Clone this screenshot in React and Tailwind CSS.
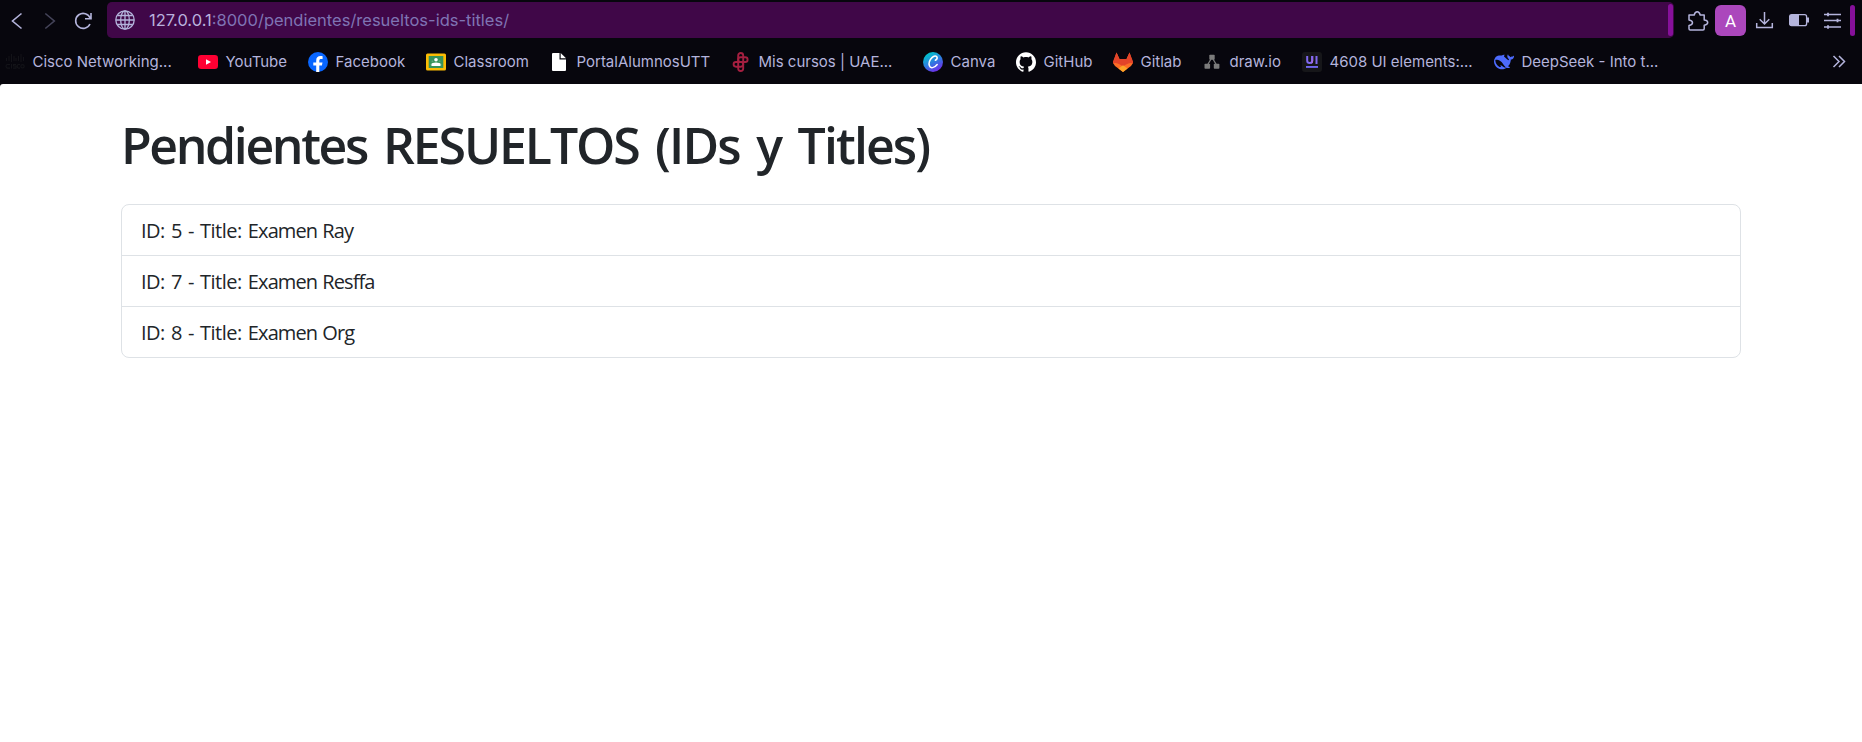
import React from "react";
import { SiGithub } from "react-icons/si";

const items = [
  { id: 5, title: "Examen Ray" },
  { id: 7, title: "Examen Resffa" },
  { id: 8, title: "Examen Org" },
];

function Cisco() {
  return (
    <svg viewBox="0 0 20 20" className="size-5" fill="none" stroke="#131318" strokeWidth="1.1">
      <path d="M1.5 6v3M4 4v5M6.5 2v8M9 4v5M11 6v3M13.5 4v5M16 2v8M18.5 5v4" />
      <path d="M5 12.5H2.5q-1.5 0-1.5 1.8t1.5 1.8H5M6.5 12v4.500M11 12.500H8.500v1.500H11v2.100H8M15 12.500h-1.500q-1.300 0-1.300 1.800t1.300 1.800H15" />
      <circle cx="17.500" cy="14.300" r="1.700" />
    </svg>
  );
}

function YouTube() {
  return (
    <svg viewBox="0 0 20 20" className="size-5">
      <rect y="3" width="20" height="14" rx="3.200" fill="#ff0033" />
      <path d="M8 7.200v5.600l5-2.800z" fill="#fff" />
    </svg>
  );
}

function Facebook() {
  return (
    <svg viewBox="0 0 20 20" className="size-5">
      <circle cx="10" cy="10" r="10" fill="#0866ff" />
      <path d="M8.200 19.900v-6.500H5.300v-3h2.900V8.700c0-3.200 1.500-4.700 4.400-4.700.7 0 1.500.1 2 .3v2.700h-1.300c-1.500 0-2 .6-2 2v1.400h3.200l-.6 3h-2.600v6.500z" fill="#fff" />
    </svg>
  );
}

function Classroom() {
  return (
    <svg viewBox="0 0 20 20" className="size-5">
      <rect y="1.500" width="20" height="17" rx="1.500" fill="#fbbc04" />
      <rect x="2.700" y="4" width="14.600" height="12" fill="#37935a" />
      <circle cx="10" cy="7.800" r="1.800" fill="#fff" />
      <circle cx="6.400" cy="9.200" r="1" fill="#57a576" />
      <circle cx="13.600" cy="9.200" r="1" fill="#57a576" />
      <path d="M4.300 13.500v-1q0-1.500 2.500-1.500h6.400q2.500 0 2.500 1.500v1z" fill="#57a576" />
      <path d="M5.500 14v-1.500q0-1.900 4.500-1.900t4.500 1.900V14z" fill="#fff" />
    </svg>
  );
}

function Page() {
  return (
    <svg viewBox="0 0 20 20" className="size-5">
      <path d="M3 2q0-1 1-1h6.500v6.500H17V18q0 1-1 1H4q-1 0-1-1z" fill="#fff" />
      <path d="M11.700 1 17 6.300h-5.300z" fill="#fff" />
    </svg>
  );
}

function Knot() {
  return (
    <svg viewBox="0 0 20 20" className="size-5" fill="none" stroke="#a51f40" strokeWidth="1.900">
      <rect x="7.200" y="1" width="5" height="18" rx="2.500" />
      <rect x="7.200" y="5.300" width="9.400" height="4.700" rx="2.350" />
      <rect x="2.600" y="10" width="9.600" height="4.700" rx="2.350" />
    </svg>
  );
}

function Canva() {
  return (
    <svg viewBox="0 0 20 20" className="size-5">
      <defs>
        <linearGradient id="canva" x1="0.200" y1="0.100" x2="0.700" y2="1">
          <stop offset="0" stopColor="#00c4cc" />
          <stop offset="0.500" stopColor="#2f7be0" />
          <stop offset="1" stopColor="#7426ec" />
        </linearGradient>
      </defs>
      <circle cx="10" cy="10" r="10" fill="url(#canva)" />
      <path d="M12.300 8.300c1.400-.6 2.100-2 1.700-3.200-.5-1.500-3-1.500-5 .5-2.300 2.300-3.400 5.800-2.600 8.200.9 2.900 4.900 2.400 7.800-1.300" fill="none" stroke="#fff" strokeWidth="1.500" strokeLinecap="round" />
    </svg>
  );
}

function Gitlab() {
  return (
    <svg viewBox="0 0 20 20" className="size-5">
      <path d="M0 11 3.500.5 6.500 7h7l3-6.500L20 11l-2 3-8 6-8-6z" fill="#fc6d26" />
      <path d="M0 9.500 3.500.5l2.900 6.600h7.200L16.500.5 20 9.500q.2 1-.1 1.800-4-1.500-9.900 3.200Q4.100 9.800.1 11.300-.2 10.500 0 9.500z" fill="#e24329" />
      <path d="m5.500 16.600 4.500-3.300 4.500 3.300L10 20z" fill="#fca326" />
    </svg>
  );
}

function Drawio() {
  return (
    <svg viewBox="0 0 20 20" className="size-5" fill="#7b7b7b">
      <path d="M9 7 5.500 13M11 7l3.500 6" stroke="#7b7b7b" strokeWidth="1.300" />
      <rect x="7.300" y="2.800" width="5.400" height="5" rx="0.800" />
      <rect x="2.500" y="11.800" width="5.600" height="5" rx="0.800" />
      <rect x="11.800" y="11.800" width="5.600" height="5" rx="0.800" />
    </svg>
  );
}

function UiElements() {
  return (
    <svg viewBox="0 0 20 20" className="size-5">
      <defs>
        <linearGradient id="ui" x1="0" y1="0" x2="1" y2="1">
          <stop offset="0" stopColor="#6b67ff" />
          <stop offset="0.600" stopColor="#9467e8" />
          <stop offset="1" stopColor="#d67bc5" />
        </linearGradient>
      </defs>
      <rect width="20" height="20" rx="3" fill="#161619" />
      <path d="M5.200 4v4.700q0 2.300 2.500 2.300t2.500-2.300V4M14.500 4v8" fill="none" stroke="#8068f0" strokeWidth="2" />
      <path d="M9.200 4h2v4.700q0 2-1.500 3l-1.300-1.500q.8-.4.800-1.500z" fill="url(#ui)" />
      <path d="M4 14h12v1.900H4z" fill="#7166ee" />
    </svg>
  );
}

function DeepSeek() {
  return (
    <svg viewBox="0 0 24 24" className="size-5">
      <path
        fill="#4d6bfe"
        d="M23.748 4.482c-.254-.124-.364.113-.512.234-.051.039-.094.090-.137.136-.372.397-.806.657-1.373.626-.829-.046-1.537.214-2.163.848-.133-.782-.575-1.248-1.247-1.548-.352-.156-.708-.311-.955-.650-.172-.241-.219-.510-.305-.774-.055-.160-.110-.323-.293-.350-.200-.031-.278.136-.356.276-.313.572-.434 1.202-.422 1.840.027 1.436.633 2.580 1.838 3.393.137.093.172.187.129.323-.082.280-.180.552-.266.833-.055.179-.137.217-.329.140a5.526 5.526 0 0 1-1.736-1.180c-.857-.828-1.631-1.742-2.597-2.458a11.365 11.365 0 0 0-.689-.471c-.985-.957.130-1.743.388-1.836.270-.098.093-.432-.779-.428-.872.004-1.670.295-2.687.684a3.055 3.055 0 0 1-.465.137 9.597 9.597 0 0 0-2.883-.102c-1.885.210-3.390 1.102-4.497 2.623C.082 8.606-.231 10.684.152 12.850c.403 2.284 1.569 4.175 3.360 5.653 1.858 1.533 3.997 2.284 6.438 2.140 1.482-.085 3.133-.284 4.994-1.860.470.234.962.327 1.780.397.630.059 1.236-.030 1.705-.128.735-.156.684-.837.419-.961-2.155-1.004-1.682-.595-2.113-.926 1.096-1.296 2.746-2.642 3.392-7.003.050-.347.007-.565 0-.845-.004-.170.035-.237.230-.256a4.173 4.173 0 0 0 1.545-.475c1.396-.763 1.960-2.015 2.093-3.517.020-.230-.004-.467-.247-.588zM11.581 18c-2.089-1.642-3.102-2.183-3.520-2.160-.392.024-.321.471-.235.763.090.288.207.486.371.739.114.167.192.416-.113.603-.673.416-1.842-.140-1.897-.167-1.361-.802-2.500-1.860-3.301-3.307-.774-1.393-1.224-2.887-1.298-4.482-.020-.386.093-.522.477-.592a4.696 4.696 0 0 1 1.529-.039c2.132.312 3.946 1.265 5.468 2.774.868.860 1.525 1.887 2.202 2.891.720 1.066 1.494 2.082 2.480 2.914.348.292.625.514.891.677-.802.090-2.140.110-3.054-.614z"
      />
    </svg>
  );
}

function GitHub() {
  return <SiGithub className="size-5 text-white" />;
}

const bookmarks = [
  { label: "Cisco Networking...", Icon: Cisco, w: "w-[193px]" },
  { label: "YouTube", Icon: YouTube, w: "w-[110px]" },
  { label: "Facebook", Icon: Facebook, w: "w-[118px]" },
  { label: "Classroom", Icon: Classroom, w: "w-[123px]" },
  { label: "PortalAlumnosUTT", Icon: Page, w: "w-[182px]" },
  { label: "Mis cursos | UAE...", Icon: Knot, w: "w-[192px]" },
  { label: "Canva", Icon: Canva, w: "w-[93px]" },
  { label: "GitHub", Icon: GitHub, w: "w-[97px]" },
  { label: "Gitlab", Icon: Gitlab, w: "w-[89px]" },
  { label: "draw.io", Icon: Drawio, w: "w-[100px]" },
  { label: "4608 UI elements:...", Icon: UiElements, w: "w-[192px]" },
  { label: "DeepSeek - Into t...", Icon: DeepSeek, w: "w-[180px]" },
];

function Toolbar() {
  return (
    <div className="flex h-10 items-center pb-px text-[#b4b4dc]">
      <svg className="ml-[7px] size-5 shrink-0" viewBox="0 0 20 20" fill="none" stroke="currentColor" strokeWidth="1.600">
        <path d="M14.500 3.500 5.500 11l9 7.500" />
      </svg>
      <svg className="ml-[13px] size-5 shrink-0" viewBox="0 0 20 20" fill="none" stroke="#45445a" strokeWidth="1.600">
        <path d="m5.300 3.500 9 7.500-9 7.500" />
      </svg>
      <svg className="ml-[13px] size-5 shrink-0" viewBox="0 0 20 20" fill="none" stroke="currentColor" strokeWidth="1.600">
        <path d="M17 14a7.500 7.500 0 1 1 .2-5.800M18 3v5.700h-6" />
      </svg>
      <div className="ml-[14px] mt-px flex h-9 w-[1567px] shrink-0 items-center rounded-[5px] bg-[#400748] pl-2">
        <svg className="size-5 shrink-0" viewBox="0 0 20 20" fill="none" stroke="currentColor" strokeWidth="1.300">
          <circle cx="10" cy="10" r="9.200" />
          <ellipse cx="10" cy="10" rx="4.300" ry="9.200" />
          <path d="M10 1v18M1 10h18M2.500 5.500h15M2.500 14.500h15" />
        </svg>
        <span className="ml-[14px] whitespace-nowrap text-[16.500px] leading-5 text-[#7f74b4]">
          <span className="text-[#b9b1dd]">127.0.0.1</span>:8000/pendientes/resueltos-ids-titles/
        </span>
        <span className="ml-auto mr-px h-8 w-[5px] rounded-[3px] bg-[#86109a]" />
      </div>
      <svg className="ml-[13px] mt-[2px] size-[22px] shrink-0" viewBox="0 0 22 22" fill="none" stroke="currentColor" strokeWidth="1.500" strokeLinejoin="round">
        <path d="M2 5h5.200q.8-3.200 3-3.200t3 3.200h4v5q3.500.3 3.500 2.600t-3.500 2.600v3.500q0 1.200-1.200 1.200H3.200Q2 19.900 2 18.700v-3.200q3.500-.5 3.500-2.800T2 9.900z" />
      </svg>
      <div className="ml-[6px] mt-[2px] flex h-[31px] w-[31px] shrink-0 items-center justify-center rounded-[6px] bg-[#ab47bc] pt-[2px] font-['Roboto',sans-serif] text-[17px] leading-none text-white">A</div>
      <svg className="ml-[9px] mt-px size-5 shrink-0" viewBox="0 0 20 20" fill="none" stroke="currentColor" strokeWidth="1.500">
        <path d="M9.500 2v12M4.700 9.200l4.800 4.800 4.800-4.800M1.700 13v4.500h15.600V13" />
      </svg>
      <svg className="ml-[14px] size-5 shrink-0" viewBox="0 0 20 20">
        <rect x="0.600" y="4.700" width="17" height="11" rx="2" fill="none" stroke="currentColor" strokeWidth="1.300" />
        <path d="M1 5h9v10.500H1z" fill="currentColor" />
        <path d="M18 7.500h2v5h-2z" fill="currentColor" />
      </svg>
      <svg className="ml-[14px] size-5 shrink-0" viewBox="0 0 20 20" stroke="currentColor" fill="none" strokeWidth="1.500">
        <path d="M1 4.500h17M1 10.500h17M1 17h17" />
        <path d="M5 2.800v3.400M14.500 8.800v3.400M5 15.300v3.400" strokeWidth="1.800" />
      </svg>
      <span className="ml-[7px] mt-[2px] h-[31px] w-[5px] shrink-0 rounded-[3px] bg-[#86109a]" />
    </div>
  );
}

export default function App() {
  return (
    <div className="flex h-[742px] w-full flex-col overflow-hidden bg-[#07060d] font-['Inter',sans-serif]">
      <header className="h-[84px] shrink-0">
        <Toolbar />
        <nav className="flex h-11 items-center pl-[5px] text-[15px] leading-5 text-[#b4b4dc]">
          {bookmarks.map(({ label, Icon, w }) => (
            <a key={label} className={`flex shrink-0 items-center gap-[7.500px] whitespace-nowrap ${w}`}>
              <Icon />
              <span>{label}</span>
            </a>
          ))}
          <svg className="ml-auto mr-[13px] size-5" viewBox="0 0 20 20" fill="none" stroke="currentColor" strokeWidth="1.500">
            <path d="m4.500 4 5.500 5.500L4.500 15M10 4l5.500 5.500L10 15" />
          </svg>
        </nav>
      </header>
      <main className="flex-1 rounded-tl-[3px] bg-white px-[121px] pt-[31px] font-['Open_Sans',sans-serif] text-[#212529]">
        <h1 className="whitespace-nowrap text-[50px] font-semibold leading-[60px] [word-spacing:5.500px]">
          <span className="tracking-[-2.400px]">Pendientes </span>
          <span className="tracking-[-2.100px]">RESUELTOS </span>
          <span className="tracking-[-1.900px]">(IDs y Titles)</span>
        </h1>
        <ul className="mt-[29px] divide-y divide-[#dee2e6] rounded-[8px] border border-[#dee2e6]">
          {items.map(({ id, title }) => (
            <li key={id} className="h-[51px] whitespace-nowrap pl-[19px] pr-5 pt-[11px] text-[20px] leading-[30px] last:h-[50px]">
              <span className="tracking-[-0.500px] [word-spacing:1.400px]">ID: {id} - Title: </span>
              <span className="tracking-[-0.900px] [word-spacing:0.800px]">{title}</span>
            </li>
          ))}
        </ul>
      </main>
    </div>
  );
}
